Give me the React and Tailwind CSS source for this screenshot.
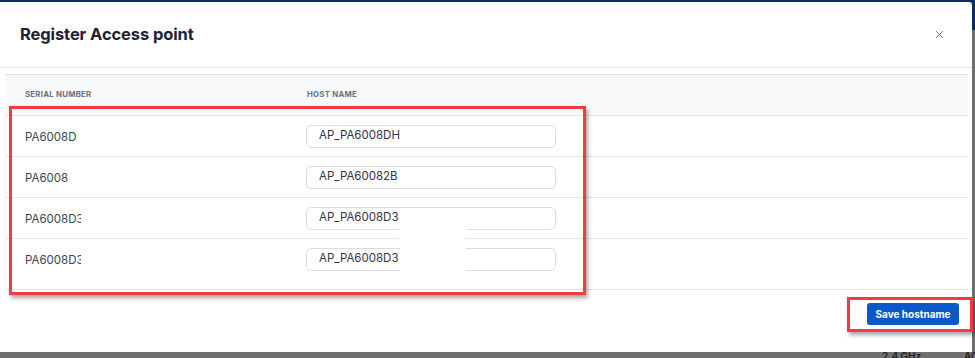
import { X } from "lucide-react";

const rows = [
  { serial: "PA6008D", serialW: "w-[54px]", host: "AP_PA6008DH" },
  { serial: "PA6008", serialW: "w-[47px]", host: "AP_PA60082B" },
  { serial: "PA6008D3", serialW: "w-[56px]", host: "AP_PA6008D3" },
  { serial: "PA6008D3", serialW: "w-[56px]", host: "AP_PA6008D3" },
];

const App = () => {
  return (
    <div
      className="relative w-[975px] h-[358px] overflow-hidden bg-[#6f6f6f] flex flex-col"
      style={{ fontFamily: "Inter, 'Noto Sans', sans-serif" }}
    >
      {/* page behind the modal */}
      <div className="h-[2px] bg-[#0d2b5e] shrink-0" />
      <div className="flex shrink-0">
        <div className="w-[972px] h-[350px] bg-white rounded-tr-[4px] flex flex-col shadow-[0_2px_3px_rgba(0,0,0,0.35)]">
          {/* Header */}
          <div className="h-[66px] shrink-0 flex items-center justify-between pl-5 pr-[26px] border-b border-[#e3e5e8]">
            <h2 className="text-[16.5px] font-bold text-[#1d2330] tracking-[-0.1px]">
              Register Access point
            </h2>
            <X size={13} strokeWidth={1.6} className="text-[#6b6f76]" />
          </div>

          {/* Table */}
          <div className="mt-[6px] ml-[5px] mr-[4px] border-t border-[#e3e5e8]">
            <div className="h-[41px] bg-[#f8f9fb] border-b border-[#e3e5e8] flex items-center text-[7.8px] font-bold tracking-[0.25px] text-[#6b7280] uppercase">
              <div className="w-[302px] pl-5">Serial Number</div>
              <div>Host Name</div>
            </div>
            {rows.map((r, i) => (
              <div
                key={i}
                className={`flex items-center border-b border-[#e3e5e8] ${
                  i === rows.length - 1 ? "h-[51px] pb-[10px]" : "h-[41px]"
                }`}
              >
                <div className="w-[301px] pl-5 flex items-center">
                  <span
                    className={`block overflow-hidden whitespace-nowrap text-[11.5px] leading-[14px] mt-[2px] text-[#3d4350] ${r.serialW}`}
                  >
                    {r.serial}
                  </span>
                </div>
                <div className="w-[250px] h-[23px] rounded-[5px] border border-[#d9dce1] bg-white flex items-center pl-3">
                  <span className="text-[11.5px] text-[#2f3540] whitespace-nowrap">
                    {r.host}
                  </span>
                </div>
              </div>
            ))}
          </div>

          {/* Footer */}
          <div className="flex justify-end pr-[13px] pt-[13px]">
            <button className="w-[92px] h-[22px] rounded-[3px] bg-[#0b58c8] text-white text-[10px] font-bold">
              Save hostname
            </button>
          </div>
        </div>
        <div className="w-[3px] flex flex-col">
          <div className="h-[28px] bg-[#0d2b5e]" />
          <div className="flex-1 bg-[#6f6f6f]" />
        </div>
      </div>
      <div className="relative flex-1 bg-[#707070]">
        <span className="absolute left-[882px] top-[-1px] text-[10px] font-semibold text-[#222] leading-none">
          2.4 GHz
        </span>
        <span className="absolute left-[964px] top-[-1px] text-[10px] font-semibold text-[#222] leading-none">
          AC
        </span>
      </div>

      {/* redaction patches */}
      <div className="absolute left-[399px] top-[225px] w-[67px] h-[16px] bg-white" />
      <div className="absolute left-[400px] top-[246px] w-[66px] h-[30px] bg-white" />

      {/* annotation boxes */}
      <div className="absolute left-[9px] top-[106px] w-[577px] h-[189px] border-[3px] border-[#f03a45] shadow-[2px_3px_4px_rgba(0,0,0,0.35)]" />
      <div className="absolute left-[847px] top-[297px] w-[126px] h-[35px] border-[3px] border-[#f03a45] shadow-[2px_3px_4px_rgba(0,0,0,0.35)]" />
    </div>
  );
};

export default App;
